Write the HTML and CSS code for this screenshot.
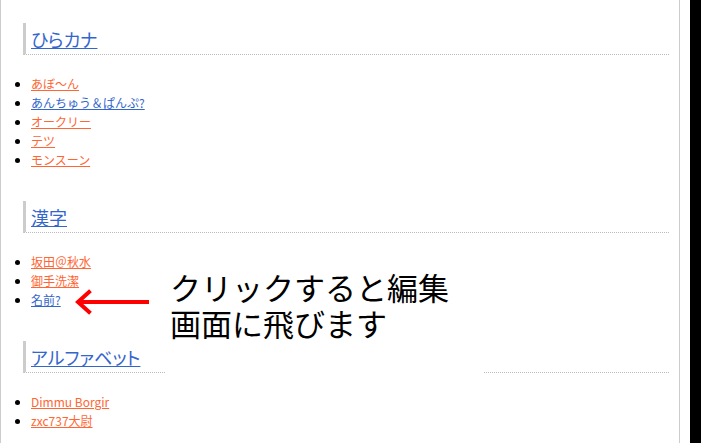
FILE: index.html
```html
<!DOCTYPE html>
<html lang="ja">
<head>
<meta charset="utf-8">
<title>一覧</title>
<link rel="stylesheet" href="styles.css">
</head>
<body>
<div class="frame">
  <div class="page">
    <section class="group">
      <h2 class="group-title"><a href="#" class="link-blue">ひらカナ</a></h2>
      <ul class="entries">
        <li><a href="#" class="link-orange">あぼ～ん</a></li>
        <li><a href="#" class="link-blue">あんちゅう＆ぱんぷ?</a></li>
        <li><a href="#" class="link-orange">オークリー</a></li>
        <li><a href="#" class="link-orange">テツ</a></li>
        <li><a href="#" class="link-orange">モンスーン</a></li>
      </ul>
    </section>
    <section class="group">
      <h2 class="group-title"><a href="#" class="link-blue">漢字</a></h2>
      <ul class="entries">
        <li><a href="#" class="link-orange">坂田＠秋水</a></li>
        <li><a href="#" class="link-orange">御手洗潔</a></li>
        <li><a href="#" class="link-blue">名前?</a></li>
      </ul>
    </section>
    <section class="group">
      <h2 class="group-title"><a href="#" class="link-blue">アルファベット</a></h2>
      <ul class="entries">
        <li><a href="#" class="link-orange">Dimmu Borgir</a></li>
        <li><a href="#" class="link-orange">zxc737大尉</a></li>
      </ul>
    </section>
  </div>
  <div class="spacer"></div>
  <div class="edge"></div>
</div>

<svg class="arrow" width="74" height="26" viewBox="0 0 74 26">
  <path d="M72 13 H4 M14 3 L3 13 L14 23" fill="none" stroke="#ff0000" stroke-width="4" stroke-linecap="square" stroke-linejoin="miter"/>
</svg>
<div class="note">クリックすると編集<br>画面に飛びます</div>
</body>
</html>
```

FILE: styles.css
```css
html, body {
  margin: 0;
  padding: 0;
  background: #ffffff;
}
body {
  font-family: "Noto Sans CJK JP", "MS PGothic", sans-serif;
  font-size: 12px;
  width: 701px;
  height: 443px;
  overflow: hidden;
  position: relative;
}
.frame {
  display: flex;
  height: 443px;
}
.page {
  width: 678px;
  border-left: 1px solid #cccccc;
  border-right: 1px solid #cccccc;
  padding-top: 23px;
  box-sizing: content-box;
}
.spacer {
  width: 10px;
}
.edge {
  flex: 1;
  background: #000000;
}
.group-title {
  margin: 0 10px 0 22px;
  padding: 3px 0 2px 5px;
  line-height: 26px;
  font-size: 18px;
  font-weight: normal;
  font-feature-settings: "palt";
  border-left: 3px solid #cccccc;
  border-bottom: 1px dotted #bbbbbb;
}
.entries {
  margin: 19px 0 32px 0;
  padding: 0 0 0 30px;
  list-style: disc;
}
.entries li {
  line-height: 19px;
  height: 19px;
}
a {
  text-decoration: underline;
}
.link-blue {
  color: #3366cc;
}
.link-orange {
  color: #ff6633;
}
.arrow {
  position: absolute;
  left: 75px;
  top: 289px;
}
.note {
  position: absolute;
  left: 166px;
  top: 265px;
  width: 313px;
  height: 104px;
  padding: 4px 0 0 4px;
  background: #ffffff;
  color: #000000;
  font-family: "Noto Sans CJK JP", sans-serif;
  font-size: 31px;
  line-height: 36px;
}
```
